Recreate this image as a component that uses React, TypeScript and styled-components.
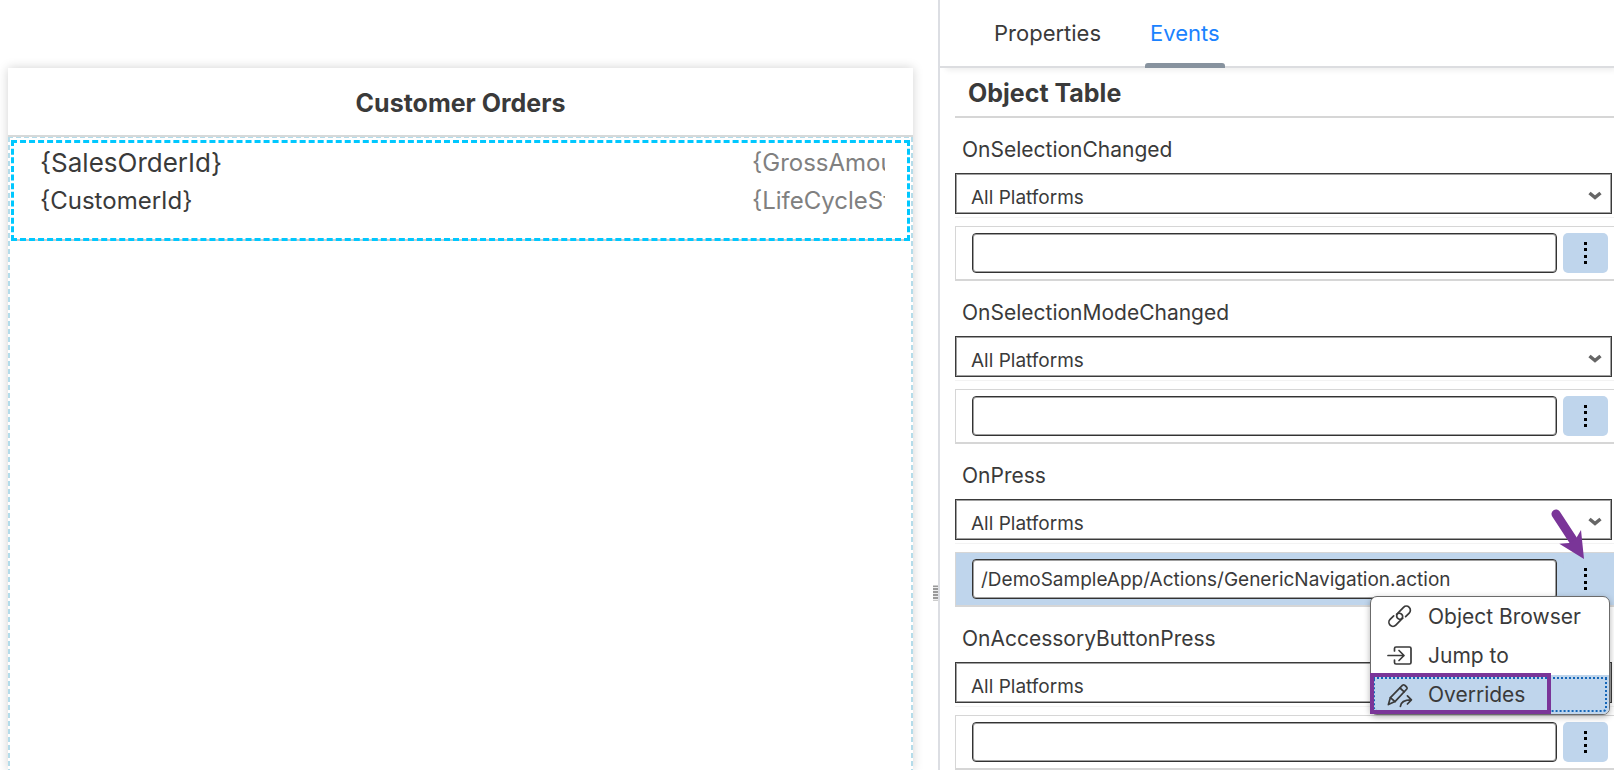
import React, { useState } from 'react';
import styled, { createGlobalStyle, css } from 'styled-components';

const GlobalStyle = createGlobalStyle`
  *, *::before, *::after { box-sizing: border-box; }
  body {
    margin: 0;
    background: #fff;
    color: #3a3a3a;
    font-family: Inter, "Liberation Sans", sans-serif;
    font-size: 21px;
  }
  button, input, select { font-family: inherit; color: inherit; margin: 0; }
`;

const Shell = styled.div`
  display: grid;
  grid-template-columns: minmax(0, 938fr) minmax(0, 676fr);
  height: 100vh;
  overflow: hidden;
`;

const Canvas = styled.main`
  display: flex;
  padding: 68px 25px 0 8px;
  min-width: 0;
`;

const Card = styled.section`
  flex: 1;
  display: flex;
  flex-direction: column;
  min-width: 0;
  background: #fff;
  box-shadow: 0 0 10px rgba(0, 0, 0, 0.18);
`;

const CardHeader = styled.header`
  display: flex;
  align-items: center;
  justify-content: center;
  height: 69px;
  padding-top: 2px;
  border-bottom: 2px solid #d6d9d9;
`;

const CardTitle = styled.h1`
  margin: 0;
  font-size: 25px;
  line-height: 30px;
  font-weight: 700;
`;

const dashes = '#b4dcea 0 5px, transparent 5px 8px';

const DropZone = styled.div`
  flex: 1;
  padding: 3px;
  background:
    repeating-linear-gradient(to right, ${dashes}) top / 100% 1px no-repeat,
    repeating-linear-gradient(to bottom, ${dashes}) left / 2px 100% no-repeat,
    repeating-linear-gradient(to bottom, ${dashes}) right / 2px 100% no-repeat;
`;

const ObjectCell = styled.article`
  display: flex;
  justify-content: space-between;
  height: 101px;
  padding: 1px 22px 0 26px;
  border: 3px dashed #00c8ff;
  background: linear-gradient(#ccc, #ccc) bottom / 100% 2px no-repeat border-box;
`;

const CellColumn = styled.div<{ $status?: boolean }>`
  white-space: nowrap;
  ${(p) =>
    p.$status &&
    css`
      width: 133px;
      overflow: hidden;
      color: #808080;
    `}
`;

const CellLine = styled.div<{ $primary?: boolean }>`
  font-size: ${(p) => (p.$primary ? '26px' : '24px')};
  line-height: 38px;
`;

const Panel = styled.aside`
  position: relative;
  min-width: 0;
  border-left: 2px solid #dcdee3;
`;

const Grip = styled.div`
  position: absolute;
  left: -7px;
  top: 77%;
  width: 5px;
  height: 15px;
  transform: translateY(-50%);
  background: repeating-linear-gradient(to bottom, #9a9a9a 0 2px, #eee 2px 3px);
`;

const TabBar = styled.div`
  display: flex;
  gap: 39px;
  height: 68px;
  padding-left: 49px;
  border-bottom: 2px solid #dcdde0;
  box-shadow: 4px 4px 6px -2px rgba(0, 0, 0, 0.08);
`;

const Tab = styled.button<{ $active?: boolean }>`
  position: relative;
  height: 66px;
  padding: 0 5px;
  border: 0;
  background: none;
  font-size: 22px;
  line-height: 26px;
  color: ${(p) => (p.$active ? '#1a82ff' : 'inherit')};
  ${(p) =>
    p.$active &&
    css`
      &::after {
        content: '';
        position: absolute;
        inset: auto 0 -2px;
        height: 5px;
        border-radius: 3px 3px 0 0;
        background: #87929e;
      }
    `}
`;

const PanelBody = styled.div`
  padding-left: 15px;
`;

const GroupTitle = styled.h2`
  margin: 0;
  padding: 11px 13px 8px;
  border-bottom: 2px solid #d6d6d6;
  font-size: 25px;
  line-height: 29px;
  font-weight: 700;
`;

const Field = styled.section`
  display: flex;
  flex-direction: column;
`;

const FieldLabel = styled.label`
  padding: 18px 7px 10px;
  font-size: 21px;
  line-height: 27px;
`;

const SelectBox = styled.div`
  display: grid;
  align-items: center;
  padding-right: 2px;
  > * { grid-area: 1 / 1; }
`;

const PlatformSelect = styled.select`
  appearance: none;
  width: 100%;
  height: 41px;
  padding: 8px 40px 0 15px;
  border: 1px solid #3a3a3a;
  border-radius: 0;
  background: #fff;
  box-shadow: inset 0 0 0 1px #a0a0a0;
  font-size: 19px;
`;

const Chevron = styled.svg`
  justify-self: end;
  width: 14px;
  height: 9px;
  margin: 3px 10px 0 0;
  pointer-events: none;
`;

const Hairline = styled.hr`
  width: 100%;
  margin: 3px 0 8px;
  border: 0;
  border-top: 1px solid #f3f3f3;
`;

const ValueRow = styled.div<{ $selected?: boolean }>`
  position: relative;
  display: flex;
  gap: 6px;
  padding: 6px 6px 6px 16px;
  border: solid #d6d6d6;
  border-width: 1px 0 2px 1px;
  background: ${(p) => (p.$selected ? '#bfd5ec' : '#fff')};
`;

const ValueInput = styled.input`
  flex: 1;
  min-width: 0;
  height: 40px;
  padding: 0 8px;
  border: 1px solid #333;
  border-radius: 4px;
  background: #fff;
  box-shadow: inset 0 0 0 1px #a0a0a0;
  font-size: 19px;
`;

const MoreButton = styled.button`
  display: grid;
  place-items: center;
  width: 45px;
  height: 40px;
  padding: 0;
  border: 0;
  border-radius: 5px;
  background: #bfd5ec;
`;

const Menu = styled.div`
  position: absolute;
  z-index: 2;
  top: 43px;
  right: 4px;
  width: 240px;
  border: 1px solid #6b6b6b;
  border-radius: 7px;
  background: #fff;
  box-shadow: 0 2px 6px rgba(0, 0, 0, 0.3);
`;

const MenuItem = styled.button<{ $focused?: boolean }>`
  position: relative;
  display: flex;
  align-items: center;
  gap: 15px;
  width: 100%;
  height: 39px;
  padding: 0 0 0 16px;
  border: 0;
  border-radius: 0 0 6px 6px;
  background: ${(p) => (p.$focused ? '#bfd5ec' : 'transparent')};
  font-size: 21px;
  line-height: 26px;
  text-align: left;
  ${(p) =>
    p.$focused &&
    css`
      outline: 2px dotted #1466b8;
      outline-offset: -4px;
    `}
`;

const Highlight = styled.span`
  position: absolute;
  inset: -2px 58px 0 -1px;
  border: 4px solid #7a3598;
`;

const Pointer = styled.svg`
  position: absolute;
  z-index: 1;
  top: -46px;
  right: 26px;
  width: 40px;
  height: 54px;
  pointer-events: none;
`;

const Icon = styled.svg`
  flex: none;
  width: 26px;
  height: 26px;
  fill: none;
  stroke: #3a3a3a;
  stroke-width: 1.7;
  stroke-linecap: round;
  stroke-linejoin: round;
`;

const LinkIcon = () => (
  <Icon viewBox="0 0 26 26" aria-hidden="true">
    <path d="M15.8 14.2C13.4 16.4 9.4 14.8 9.7 11.6Q9.9 10.2 10.9 9.2L16.5 3.4A4 4 0 0 1 22.2 9.1L18.6 12.7" />
    <path d="M9.5 10.3C11.9 8.1 15.9 9.7 15.6 12.9Q15.4 14.3 14.4 15.3L8.8 21.1A4 4 0 0 1 3.1 15.4L6.7 11.8" />
  </Icon>
);

const JumpIcon = () => (
  <Icon viewBox="0 0 26 26" aria-hidden="true">
    <path d="M1 12.5H17M12 7.5L17 12.5L12 17.5" />
    <path d="M7.5 8V5.5Q7.5 4 9 4H22.5Q24 4 24 5.5V19.5Q24 21 22.5 21H9Q7.5 21 7.5 19.5V17" />
  </Icon>
);

const OverrideIcon = () => (
  <Icon viewBox="0 0 26 26" aria-hidden="true">
    <path d="M1.4 22.6L3.4 15.6L15.6 3.2Q16.6 2.4 17.6 3.2L19.6 5Q20.6 6 19.8 7L8 19.6Z" />
    <path d="M3.4 15.6L8 19.6M13 6L17.2 9.8" />
    <path d="M13.4 24.4C13.8 20.4 17 17.9 24.2 17.9M20.4 13.8L24.4 17.9L20.4 22" />
  </Icon>
);

const Dots = () => (
  <svg width="3" height="22" viewBox="0 0 3 22" aria-hidden="true">
    {[0, 6, 13, 19].map((y) => (
      <rect key={y} y={y} width="3" height="3" fill="#000" />
    ))}
  </svg>
);

const events = [
  { name: 'OnSelectionChanged', value: '' },
  { name: 'OnSelectionModeChanged', value: '' },
  { name: 'OnPress', value: '/DemoSampleApp/Actions/GenericNavigation.action' },
  { name: 'OnAccessoryButtonPress', value: '' },
];

function ActionMenu() {
  return (
    <>
      <Pointer viewBox="0 0 40 54" aria-hidden="true">
        <path d="M8 7L25 33" stroke="#7a3598" strokeWidth="9" strokeLinecap="round" />
        <path d="M36 52L11.3 36.7L21 36L28 31.5L33 23Z" fill="#7a3598" />
      </Pointer>
      <Menu role="menu">
        <MenuItem role="menuitem" type="button"><LinkIcon />Object Browser</MenuItem>
        <MenuItem role="menuitem" type="button"><JumpIcon />Jump to</MenuItem>
        <MenuItem role="menuitem" type="button" $focused>
          <OverrideIcon />Overrides
          <Highlight />
        </MenuItem>
      </Menu>
    </>
  );
}

function EventField({ name, initial }: { name: string; initial: string }) {
  const [value, setValue] = useState(initial);
  const open = name === 'OnPress';
  return (
    <Field>
      <FieldLabel htmlFor={name}>{name}</FieldLabel>
      <SelectBox>
        <PlatformSelect id={name} defaultValue="all">
          <option value="all">All Platforms</option>
        </PlatformSelect>
        <Chevron viewBox="0 0 14 9" aria-hidden="true">
          <path d="M1.5 2L7 6.5L12.5 2" fill="none" stroke="#666" strokeWidth="3.5" />
        </Chevron>
      </SelectBox>
      <Hairline />
      <ValueRow $selected={open}>
        <ValueInput
          aria-label={`${name} action`}
          value={value}
          onChange={(e) => setValue(e.target.value)}
        />
        <MoreButton type="button" aria-label={`${name} options`}><Dots /></MoreButton>
        {open && <ActionMenu />}
      </ValueRow>
    </Field>
  );
}

export default function App() {
  return (
    <>
      <GlobalStyle />
      <Shell>
        <Canvas>
          <Card>
            <CardHeader><CardTitle>Customer Orders</CardTitle></CardHeader>
            <DropZone>
              <ObjectCell>
                <CellColumn>
                  <CellLine $primary>{'{SalesOrderId}'}</CellLine>
                  <CellLine>{'{CustomerId}'}</CellLine>
                </CellColumn>
                <CellColumn $status>
                  <CellLine>{'{GrossAmount}'}</CellLine>
                  <CellLine>{'{LifeCycleStatus}'}</CellLine>
                </CellColumn>
              </ObjectCell>
            </DropZone>
          </Card>
        </Canvas>
        <Panel>
          <Grip />
          <TabBar role="tablist">
            <Tab role="tab" type="button">Properties</Tab>
            <Tab role="tab" type="button" aria-selected $active>Events</Tab>
          </TabBar>
          <PanelBody>
            <GroupTitle>Object Table</GroupTitle>
            {events.map((e) => (
              <EventField key={e.name} name={e.name} initial={e.value} />
            ))}
          </PanelBody>
        </Panel>
      </Shell>
    </>
  );
}
